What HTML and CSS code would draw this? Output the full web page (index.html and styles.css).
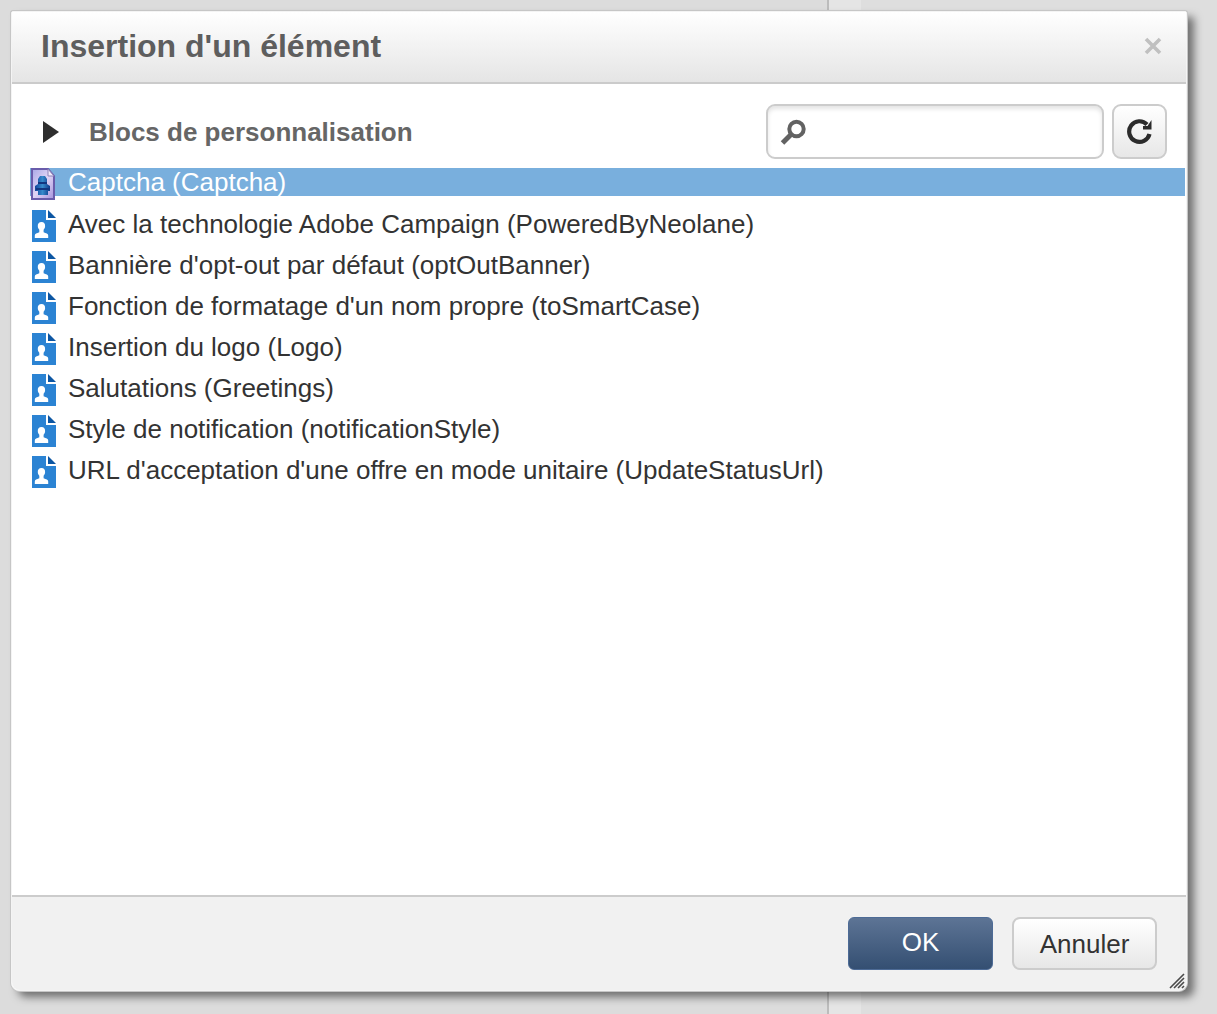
FILE: index.html
```html
<!DOCTYPE html>
<html lang="fr">
<head>
<meta charset="utf-8">
<meta name="viewport" content="width=device-width, initial-scale=1">
<title>Insertion d'un élément</title>
<link rel="stylesheet" href="styles.css">
</head>
<body class="backdrop">
<svg class="symbols" aria-hidden="true">
  <symbol id="block-icon" viewBox="0 0 24 32">
    <path fill="#2b83d3" d="M0 0h14v10h10v22H0z"/>
    <path fill="#0c56a3" d="M16 0l8 8h-8z"/>
    <path fill="#fff" d="M9.500 12c2.600 0 3.800 1.800 3.600 4.300-.1 1.700-.7 2.700-1.500 3.500v2.500c2.500.9 4.600 1.500 4.600 3.200V28H2.800v-2.500c0-1.700 2-2.300 4.500-3.200v-2.500c-.8-.8-1.400-1.800-1.500-3.500C5.600 13.800 6.900 12 9.500 12z"/>
  </symbol>
</svg>
<main class="dialog" role="dialog" aria-labelledby="dialog-title">
  <header class="dialog-header">
    <h1 class="dialog-title" id="dialog-title">Insertion d'un élément</h1>
    <button class="close" type="button" aria-label="Fermer">
      <svg width="18" height="18" viewBox="0 0 18 18"><path d="M2 2l14 14M16 2L2 16" stroke="#c0c0c0" stroke-width="3.600"/></svg>
    </button>
  </header>
  <section class="dialog-body">
    <div class="toolbar">
      <button class="section-toggle" type="button">
        <svg width="16" height="24" viewBox="0 0 16 24"><path d="M0 1l16 11L0 23z" fill="#2e2e2e"/></svg>
        <span>Blocs de personnalisation</span>
      </button>
      <div class="search">
        <svg width="28" height="28" viewBox="0 0 28 28" fill="none" stroke="#626262"><circle cx="16.500" cy="11" r="7.200" stroke-width="4"/><path d="M11.500 16l-9 9" stroke-width="5"/></svg>
        <input class="search-input" type="search" aria-label="Rechercher">
      </div>
      <button class="refresh" type="button" aria-label="Actualiser">
        <svg width="26" height="26" viewBox="0 0 26 26"><path d="M20 5.500A10.300 10.300 0 1 0 22.500 15" fill="none" stroke="#2b2b2b" stroke-width="4.200"/><path d="M24.500 1v9.500H16V7h4.500z" fill="#2b2b2b"/></svg>
      </button>
    </div>
    <ul class="blocks">
      <li class="block selected">
        <svg class="block-icon" viewBox="0 0 24 32">
          <defs>
            <linearGradient id="page" x1="0" y1="0" x2="1" y2="1"><stop offset="0" stop-color="#a8a8e6"/><stop offset=".5" stop-color="#e0d4f5"/><stop offset="1" stop-color="#a493dc"/></linearGradient>
            <linearGradient id="figure" x1="0" y1="0" x2="1" y2="0"><stop offset="0" stop-color="#12459b"/><stop offset=".5" stop-color="#378acb"/><stop offset="1" stop-color="#0e3a8b"/></linearGradient>
          </defs>
          <path d="M1 1h16l6 7v23H1z" fill="url(#page)" stroke="#6a5cab" stroke-width="2"/>
          <path d="M17 1v7h6z" fill="#f1ebfb" stroke="#8d82b8"/>
          <path d="M9 8h5l2 3v5l3 2v5h-2v4H7v-4H4v-5l3-2v-5z" fill="url(#figure)"/>
          <path d="M7 15h9M5 21h14" stroke="#12367f" stroke-width="2"/>
        </svg>
        <span>Captcha (Captcha)</span>
      </li>
      <li class="block"><svg class="block-icon"><use href="#block-icon"/></svg><span>Avec la technologie Adobe Campaign (PoweredByNeolane)</span></li>
      <li class="block"><svg class="block-icon"><use href="#block-icon"/></svg><span>Bannière d'opt-out par défaut (optOutBanner)</span></li>
      <li class="block"><svg class="block-icon"><use href="#block-icon"/></svg><span>Fonction de formatage d'un nom propre (toSmartCase)</span></li>
      <li class="block"><svg class="block-icon"><use href="#block-icon"/></svg><span>Insertion du logo (Logo)</span></li>
      <li class="block"><svg class="block-icon"><use href="#block-icon"/></svg><span>Salutations (Greetings)</span></li>
      <li class="block"><svg class="block-icon"><use href="#block-icon"/></svg><span>Style de notification (notificationStyle)</span></li>
      <li class="block"><svg class="block-icon"><use href="#block-icon"/></svg><span>URL d'acceptation d'une offre en mode unitaire (UpdateStatusUrl)</span></li>
    </ul>
  </section>
  <footer class="dialog-footer">
    <button class="button primary" type="button">OK</button>
    <button class="button" type="button">Annuler</button>
    <svg class="resize-grip" width="16" height="16" viewBox="0 0 16 16" aria-hidden="true"><path d="M1 15L15 1M5 15L15 5M9 15l6-6M13 15l2-2" stroke="#4a4a4a" stroke-width="1.600"/></svg>
  </footer>
</main>
</body>
</html>
```
FILE: styles.css
```css
* {
  box-sizing: border-box;
}

body,
h1,
ul {
  margin: 0;
  padding: 0;
}

button,
input {
  font: inherit;
  color: inherit;
  border: 0;
  background: none;
}

svg {
  flex: none;
  display: block;
}

.symbols {
  position: absolute;
  width: 0;
  height: 0;
}

.backdrop {
  display: flex;
  min-height: 100vh;
  padding: 11px 30px 23px 11px;
  color: #333;
  font: 26px/28px "Liberation Sans", Arial, sans-serif;
  background: linear-gradient(90deg, #dcdcdc 827px, #bcbcbc 827px 829px, #e5e5e5 829px 861px, #dedede 861px);
}

.dialog {
  flex: 1;
  display: flex;
  flex-direction: column;
  border: 1px solid #f4f4f4;
  border-radius: 2px 2px 8px 8px;
  background: #fff;
  box-shadow: 0 0 0 1px #c6c6c6, 7px 6px 8px rgba(0, 0, 0, 0.5);
}

.dialog-header {
  display: flex;
  align-items: center;
  justify-content: space-between;
  height: 72px;
  padding: 0 24px 2px 29px;
  border-bottom: 2px solid #cbcbcb;
  background: linear-gradient(#fff, #e5e5e5);
}

.dialog-title {
  color: #5e5e5e;
  font-size: 32px;
  line-height: 36px;
}

.close {
  padding: 0;
}

.dialog-body {
  flex: 1;
  padding-top: 20px;
}

.toolbar {
  display: flex;
  align-items: center;
  gap: 8px;
  padding: 0 19px 0 31px;
}

.section-toggle {
  display: flex;
  align-items: center;
  gap: 30px;
  margin-right: auto;
  padding: 0;
  color: #666;
  font-weight: bold;
}

.search {
  display: flex;
  align-items: center;
  width: 338px;
  height: 55px;
  padding: 0 12px;
  border: 2px solid #ccc;
  border-radius: 9px;
  box-shadow: inset 0 3px 4px #e4e4e4;
}

.search-input {
  flex: 1;
  min-width: 0;
  padding: 0 8px;
  outline: 0;
}

.refresh {
  display: grid;
  place-items: center;
  width: 55px;
  height: 55px;
  padding: 0;
  border: 2px solid #ccc;
  border-radius: 9px;
  background: linear-gradient(#fff, #e7e7e7);
}

.blocks {
  padding: 9px 1px 0 18px;
  list-style: none;
}

.block {
  display: flex;
  gap: 12px;
  height: 41px;
  padding-left: 2px;
}

.block-icon {
  width: 24px;
  height: 32px;
}

.selected {
  gap: 13px;
  height: 28px;
  margin-bottom: 14px;
  padding-left: 1px;
  color: #fff;
  background: #79afdd;
}

.dialog-footer {
  position: relative;
  display: flex;
  gap: 19px;
  justify-content: flex-end;
  padding: 20px 29px 20px;
  border-top: 2px solid #ccc;
  border-radius: 0 0 8px 8px;
  background: #f1f1f1;
}

.button {
  width: 145px;
  height: 53px;
  padding: 0;
  border: 2px solid #ccc;
  border-radius: 8px;
  background: linear-gradient(#fff, #e7e7e7);
}

.primary {
  border-color: #4d6b96;
  border-width: 1px;
  border-radius: 6px;
  padding-bottom: 4px;
  color: #fff;
  background: linear-gradient(#5d7495, #344f72);
}

.resize-grip {
  position: absolute;
  right: 1px;
  bottom: 1px;
}
```
